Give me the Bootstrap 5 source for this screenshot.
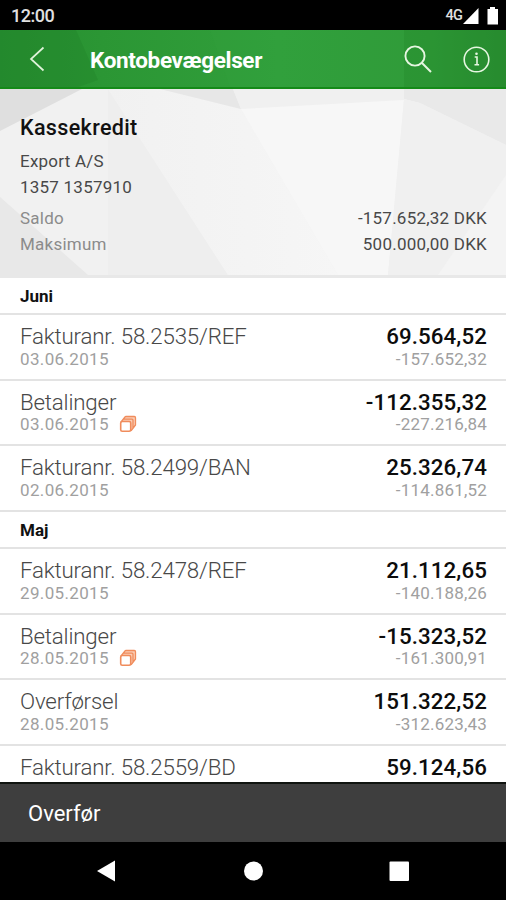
<!DOCTYPE html>
<html lang="da">
<head>
<meta charset="utf-8">
<meta name="viewport" content="width=device-width, initial-scale=1">
<title>Kontobevægelser</title>
<link href="https://cdn.jsdelivr.net/npm/bootstrap@5.3.0/dist/css/bootstrap.min.css" rel="stylesheet">
<style>
body { font-family: Roboto, "Liberation Sans", sans-serif; }
.phone { width: 506px; height: 900px; }
.status { height: 30px; padding: 1px 7px 0 11px; font-size: 18px; font-weight: 500; letter-spacing: -.5px; color: #e0e0e0; }
.status .net { font-size: 14.5px; letter-spacing: -.8px; }
.appbar { height: 59px; border-bottom: 2px solid #148a18; }
.appbar h1 { font-size: 22.5px; font-weight: 700; letter-spacing: -.35px; margin-left: 41px; line-height: 24px; padding-top: 2px; }
.find { margin-right: 29px; }
.backdrop { z-index: 0; }
.over { z-index: 1; }
.account { height: 189px; border-bottom: 3px solid #e8e8e8; padding: 26px 19px 0 20px; font-size: 17px; line-height: 26px; color: #484848; letter-spacing: .23px; }
.account h2 { font-size: 21.5px; font-weight: 500; line-height: 25px; letter-spacing: .35px; color: #111; margin-bottom: 8px; }
.soft { color: #8b8b8b; }
.amounts { margin-top: 5px; }
.month { height: 37px; border-bottom: 2px solid #e3e3e3; padding: 6.500px 20px 0; font-size: 17px; font-weight: 700; line-height: 22px; color: #111; }
.entry { height: 65.7px; border-bottom: 2px solid #e3e3e3; padding: 9px 19px 0 20px; }
.entry .name { font-size: 22.3px; font-weight: 300; line-height: 24px; letter-spacing: -.18px; color: #484848; }
.entry .sum { font-size: 22.3px; font-weight: 500; line-height: 24px; letter-spacing: .1px; color: #0c0c0c; }
.entry .sub { font-size: 17px; line-height: 20px; color: #a0a0a0; letter-spacing: .2px; padding-top: .5px; }
.entry .date { letter-spacing: .35px; }
.batch { margin-left: 10px; margin-top: 1px; }
.action { height: 60px; background: #3e3e3e; border-top: 2px solid #101410; padding-left: 28px; font-size: 22px; color: #fff; }
.keys { height: 58px; }
</style>
<script src="https://cdn.jsdelivr.net/npm/bootstrap@5.3.0/dist/js/bootstrap.bundle.min.js"></script>
</head>
<body class="bg-white">
<svg width="0" height="0" class="position-absolute" aria-hidden="true">
  <symbol id="stack" viewBox="0 0 18 18">
    <path d="M1.700 8L6 1.500H16.500V10.500L12 16.200V7.500z" fill="#fbcdb4"/>
    <rect x="1.700" y="6.500" width="10" height="9.800" rx="1.500" fill="#fff" stroke="#f08c5c" stroke-width="1.600"/>
    <path d="M2 7L6 2Q6.300 1.500 7 1.500H15.300Q16.500 1.500 16.500 2.700V10L12 15.800M4 4.200H13Q14 4.200 14 5.200V13" fill="none" stroke="#f08c5c" stroke-width="1.300" stroke-linejoin="round"/>
  </symbol>
</svg>
<div class="phone d-flex flex-column overflow-hidden">
  <div class="status bg-black d-flex align-items-center justify-content-between flex-shrink-0">
    <span>12:00</span>
    <span class="d-flex align-items-center"><span class="net">4G</span>
      <svg width="17" height="18" viewBox="0 0 17 18"><path d="M16.500 1v16H1z" fill="#fff"/></svg>
      <svg width="12" height="18" viewBox="0 0 12 18" class="ms-2"><path d="M3 0h5v2h3v15.500H.5V2H3z" fill="#fff"/></svg>
    </span>
  </div>
  <header class="appbar position-relative flex-shrink-0">
    <svg class="backdrop position-absolute top-0 start-0" width="506" height="57" viewBox="0 0 506 57">
      <defs><linearGradient id="g"><stop offset="0" stop-color="#268e30"/><stop offset=".2" stop-color="#2b9634"/><stop offset=".55" stop-color="#319f3b"/><stop offset=".85" stop-color="#2f9a38"/><stop offset="1" stop-color="#288b30"/></linearGradient></defs>
      <path d="M0 0h506v57H0z" fill="url(#g)"/>
      <path d="M0 0h76l22 50-20 7H0z" fill="#1f8229" opacity=".35"/>
      <path d="M210 0l20 57h174V0z" fill="#37a641" opacity=".15"/>
      <path d="M404 0h102v57H404z" fill="#258b2e" opacity=".4"/>
    </svg>
    <div class="over position-relative d-flex align-items-center h-100 text-white ps-4 pe-3">
      <svg width="25" height="30" viewBox="0 0 25 30"><path d="M19.500 3.500L7 15l12.500 11.500" fill="none" stroke="#e0f3da" stroke-width="1.700"/></svg>
      <h1 class="mb-0">Kontobevægelser</h1>
      <svg class="find ms-auto" width="30" height="30" viewBox="0 0 30 30"><g fill="none" stroke="#e6f6e1" stroke-width="1.900"><circle cx="12" cy="12" r="9.600"/><path d="M19 19l9 9"/></g></svg>
      <svg width="28" height="28" viewBox="0 0 28 28"><circle cx="14.500" cy="14.500" r="12.300" fill="none" stroke="#e6f6e1" stroke-width="1.600"/><path d="M12.700 12H15V19.700M12.500 19.700h4.600" fill="none" stroke="#e6f6e1" stroke-width="1.600"/><circle cx="14.500" cy="8.700" r="1.300" fill="#e6f6e1"/></svg>
    </div>
  </header>
  <section class="account position-relative flex-shrink-0">
    <svg class="backdrop position-absolute top-0 start-0" width="506" height="186" viewBox="0 0 506 186">
      <defs>
        <linearGradient id="k"><stop offset="0" stop-color="#f1f1f1"/><stop offset="1" stop-color="#f6f6f6"/></linearGradient>
      </defs>
      <path d="M0 0h506v186H0z" fill="#f1f1f1"/>
      <path d="M0 0h82L0 42z" fill="#dfdfdf"/>
      <path d="M0 108l88 78H0z" fill="#e8e8e8"/>
      <path d="M108 0l120 186H108z" fill="#eeeeee"/>
      <path d="M108 0h52l81 20 97 166H228z" fill="url(#k)"/>
      <path d="M160 0l81 20-8-20z" fill="#e7e7e7"/>
      <path d="M233 0l8 20 163-9V0z" fill="#f0f0f0"/>
      <path d="M241 20l163-9-16 175h-50z" fill="#f7f7f7"/>
      <path d="M404 0h102v56L420 14 404 10z" fill="#e9e9e9"/>
      <path d="M404 10l16 4 86 42v30l-68 100h-50z" fill="#f0f0f0"/>
      <path d="M506 86v100h-68z" fill="#f4f4f4"/>
    </svg>
    <div class="over position-relative">
      <h2>Kassekredit</h2>
      <div>Export A/S</div>
      <div>1357 1357910</div>
      <div class="amounts d-flex justify-content-between"><span class="soft">Saldo</span><span>-157.652,32 DKK</span></div>
      <div class="d-flex justify-content-between"><span class="soft">Maksimum</span><span>500.000,00 DKK</span></div>
    </div>
  </section>
  <main class="flex-grow-1 overflow-hidden">
    <div class="month">Juni</div>
    <div class="entry"><div class="d-flex justify-content-between"><span class="name">Fakturanr. 58.2535/REF</span><span class="sum">69.564,52</span></div><div class="sub d-flex justify-content-between"><span class="date">03.06.2015</span><span>-157.652,32</span></div></div>
    <div class="entry"><div class="d-flex justify-content-between"><span class="name">Betalinger</span><span class="sum">-112.355,32</span></div><div class="sub d-flex justify-content-between"><span class="date d-flex">03.06.2015<svg class="batch" width="18" height="18"><use href="#stack"/></svg></span><span>-227.216,84</span></div></div>
    <div class="entry"><div class="d-flex justify-content-between"><span class="name">Fakturanr. 58.2499/BAN</span><span class="sum">25.326,74</span></div><div class="sub d-flex justify-content-between"><span class="date">02.06.2015</span><span>-114.861,52</span></div></div>
    <div class="month">Maj</div>
    <div class="entry"><div class="d-flex justify-content-between"><span class="name">Fakturanr. 58.2478/REF</span><span class="sum">21.112,65</span></div><div class="sub d-flex justify-content-between"><span class="date">29.05.2015</span><span>-140.188,26</span></div></div>
    <div class="entry"><div class="d-flex justify-content-between"><span class="name">Betalinger</span><span class="sum">-15.323,52</span></div><div class="sub d-flex justify-content-between"><span class="date d-flex">28.05.2015<svg class="batch" width="18" height="18"><use href="#stack"/></svg></span><span>-161.300,91</span></div></div>
    <div class="entry"><div class="d-flex justify-content-between"><span class="name">Overførsel</span><span class="sum">151.322,52</span></div><div class="sub d-flex justify-content-between"><span class="date">28.05.2015</span><span>-312.623,43</span></div></div>
    <div class="entry"><div class="d-flex justify-content-between"><span class="name">Fakturanr. 58.2559/BD</span><span class="sum">59.124,56</span></div></div>
  </main>
  <div class="action d-flex align-items-center flex-shrink-0">Overfør</div>
  <nav class="keys bg-black flex-shrink-0">
    <svg width="506" height="58" viewBox="0 0 506 58" fill="#fff"><path d="M97 29l18-10.500v21z"/><circle cx="253.500" cy="29" r="9.500"/><rect x="389.500" y="19.500" width="19.500" height="19.500" rx="1"/></svg>
  </nav>
</div>
</body>
</html>
